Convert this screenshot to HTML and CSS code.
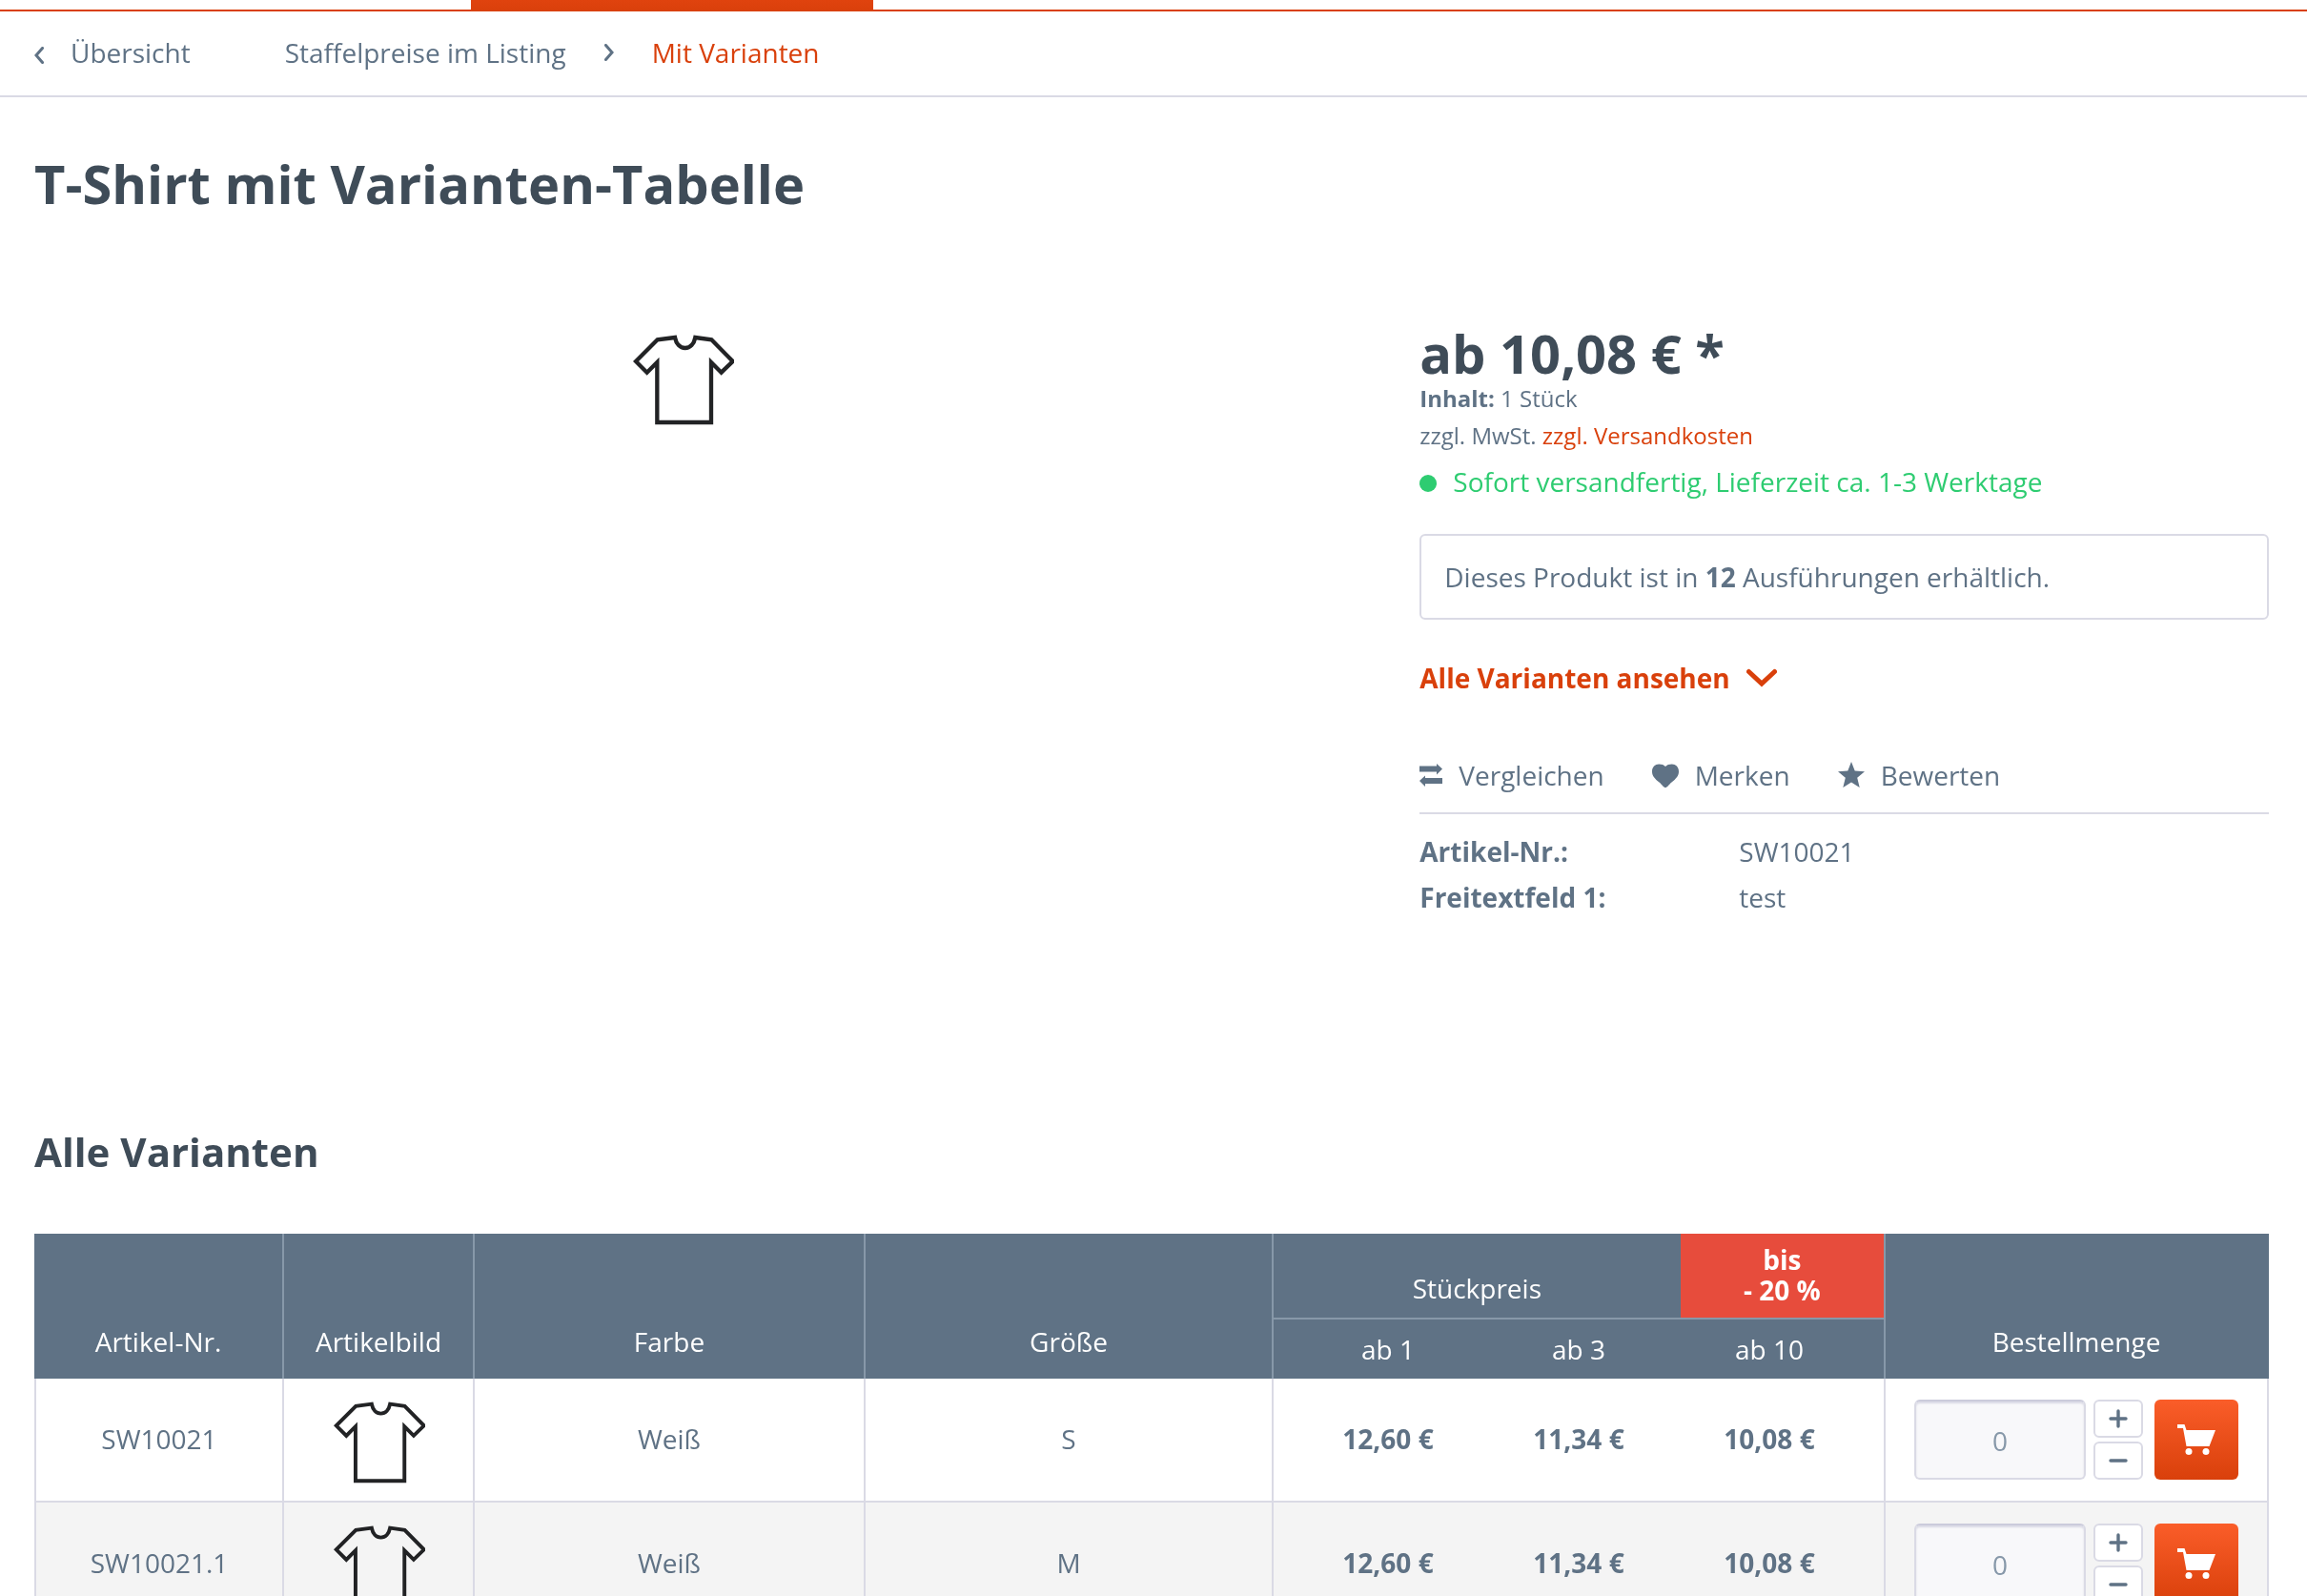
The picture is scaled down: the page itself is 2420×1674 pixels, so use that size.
FILE: index.html
```html
<!DOCTYPE html>
<html lang="de">
<head>
<meta charset="utf-8">
<meta name="viewport" content="width=device-width, initial-scale=1">
<title>T-Shirt mit Varianten-Tabelle</title>
<link rel="stylesheet" href="styles.css">
</head>
<body>
<svg class="sprite" aria-hidden="true">
  <symbol id="shirt" viewBox="72 60 318 288">
    <path d="M204 72 149 79 81 147 116 182 148 150V339H318V150L350 182 386 147 319 79 268 72C264 92 252 105 236 105S208 92 204 72Z" fill="#fff" stroke="#222325" stroke-width="13"/>
  </symbol>
  <symbol id="cart" viewBox="0 0 40 32">
    <path d="M0 0H7.500L9.500 6H40L33.500 23H9.500L6 4H0Z" fill="currentColor"/>
    <circle cx="12" cy="28.500" r="3.500" fill="currentColor"/><circle cx="30" cy="28.500" r="3.500" fill="currentColor"/>
  </symbol>
</svg>

<div class="tabbar"><span class="tabbar-active"></span></div>

<nav class="breadcrumb" aria-label="Brotkrumen">
  <a class="back" href="#"><svg class="back-arrow" viewBox="0 0 10 18" aria-hidden="true"><path d="M8.500 1.500 2 9l6.500 7.500" fill="none" stroke="currentColor" stroke-width="3" stroke-linecap="round"/></svg>Übersicht</a>
  <a class="crumb" href="#">Staffelpreise im Listing</a>
  <svg class="crumb-arrow" viewBox="0 0 10 18" aria-hidden="true"><path d="M1.500 1.500 8 9l-6.500 7.500" fill="none" stroke="currentColor" stroke-width="3" stroke-linecap="round"/></svg>
  <a class="crumb current" href="#">Mit Varianten</a>
</nav>

<main class="content">
  <h1>T-Shirt mit Varianten-Tabelle</h1>

  <section class="product">
    <div class="gallery"><svg class="shirt-large" role="img" aria-label="T-Shirt"><use href="#shirt"/></svg></div>
    <div class="buybox">
      <p class="price">ab 10,08 € *</p>
      <p class="small"><strong>Inhalt:</strong> 1 Stück</p>
      <p class="small">zzgl. MwSt. <a href="#">zzgl. Versandkosten</a></p>
      <p class="delivery"><span class="dot"></span>Sofort versandfertig, Lieferzeit ca. 1-3 Werktage</p>
      <p class="notice">Dieses Produkt ist in <strong>12</strong> Ausführungen erhältlich.</p>
      <a class="all-link" href="#varianten">Alle Varianten ansehen
        <svg class="chevron" viewBox="0 0 32 20" aria-hidden="true"><path d="M2.500 3.500 16 16 29.500 3.500" fill="none" stroke="currentColor" stroke-width="5" stroke-linecap="round"/></svg></a>
      <div class="actions">
        <button type="button"><svg class="icon-compare" viewBox="0 0 24 24" aria-hidden="true"><path d="M0 2.500H18V0L24 5.500 18 11.500V8.500H0ZM24 21H6V24L0 18 6 12.500V15H24Z" fill="currentColor"/></svg>Vergleichen</button>
        <button type="button"><svg class="icon-heart" viewBox="0 0 28 25" aria-hidden="true"><path d="M14 25C12 25 11 22.500 7.500 19.500 3 15.800 0 13 0 8.200 0 3.500 3.200 .500 7.200 .500c3 0 5.300 .800 6.800 2.500C15.500 1.300 17.800 .500 20.800 .500 24.800 .500 28 3.500 28 8.200 28 13 25 15.800 20.500 19.500 17 22.500 16 25 14 25Z" fill="currentColor"/></svg>Merken</button>
        <button type="button"><svg class="icon-star" viewBox="0 0 28 28" aria-hidden="true"><path d="M14 0 17.700 9.500 28 10.300 20.200 16.800 22.700 27 14 21.500 5.300 27 7.800 16.800 0 10.300 10.300 9.500Z" fill="currentColor"/></svg>Bewerten</button>
      </div>
      <dl class="attributes">
        <dt>Artikel-Nr.:</dt><dd>SW10021</dd>
        <dt>Freitextfeld 1:</dt><dd>test</dd>
      </dl>
    </div>
  </section>

  <section id="varianten">
    <h2>Alle Varianten</h2>
    <table class="variants">
      <colgroup><col class="c-nr"><col class="c-img"><col class="c-color"><col class="c-size"><col class="c-p1"><col class="c-p2"><col class="c-p3"><col class="c-order"></colgroup>
      <thead>
        <tr>
          <th rowspan="2">Artikel-Nr.</th>
          <th rowspan="2">Artikelbild</th>
          <th rowspan="2">Farbe</th>
          <th rowspan="2">Größe</th>
          <th class="price-head" colspan="3"><div class="price-split"><span class="unit">Stückpreis</span><strong class="discount">bis<br>- 20 %</strong></div></th>
          <th rowspan="2">Bestellmenge</th>
        </tr>
        <tr>
          <th class="tier first">ab 1</th>
          <th class="tier">ab 3</th>
          <th class="tier last">ab 10</th>
        </tr>
      </thead>
      <tbody>
        <tr>
          <td>SW10021</td>
          <td class="thumb"><svg class="shirt-small" role="img" aria-label="T-Shirt"><use href="#shirt"/></svg></td>
          <td>Weiß</td>
          <td>S</td>
          <td class="tier first">12,60 €</td>
          <td class="tier">11,34 €</td>
          <td class="tier last">10,08 €</td>
          <td class="order">
            <div class="order-row">
              <input class="qty" type="text" placeholder="0" aria-label="Bestellmenge SW10021">
              <div class="steps">
                <button type="button" aria-label="Mehr"><svg class="sign" viewBox="0 0 20 20"><path d="M2 10H18M10 2V18" stroke="currentColor" stroke-width="3.400" stroke-linecap="round"/></svg></button>
                <button type="button" aria-label="Weniger"><svg class="sign" viewBox="0 0 20 20"><path d="M2 10H18" stroke="currentColor" stroke-width="3.400" stroke-linecap="round"/></svg></button>
              </div>
              <button class="buy" type="button" aria-label="In den Warenkorb"><svg class="icon-cart"><use href="#cart"/></svg></button>
            </div>
          </td>
        </tr>
        <tr>
          <td>SW10021.1</td>
          <td class="thumb"><svg class="shirt-small" role="img" aria-label="T-Shirt"><use href="#shirt"/></svg></td>
          <td>Weiß</td>
          <td>M</td>
          <td class="tier first">12,60 €</td>
          <td class="tier">11,34 €</td>
          <td class="tier last">10,08 €</td>
          <td class="order">
            <div class="order-row">
              <input class="qty" type="text" placeholder="0" aria-label="Bestellmenge SW10021.1">
              <div class="steps">
                <button type="button" aria-label="Mehr"><svg class="sign" viewBox="0 0 20 20"><path d="M2 10H18M10 2V18" stroke="currentColor" stroke-width="3.400" stroke-linecap="round"/></svg></button>
                <button type="button" aria-label="Weniger"><svg class="sign" viewBox="0 0 20 20"><path d="M2 10H18" stroke="currentColor" stroke-width="3.400" stroke-linecap="round"/></svg></button>
              </div>
              <button class="buy" type="button" aria-label="In den Warenkorb"><svg class="icon-cart"><use href="#cart"/></svg></button>
            </div>
          </td>
        </tr>
      </tbody>
    </table>
  </section>
</main>
</body>
</html>
```

FILE: styles.css
```css
:root {
  --text: #5f7285;
  --heading: #3f4c58;
  --accent: #d9400b;
  --line: #dadae5;
  --head-line: #8798a9;
}

* { box-sizing: border-box; }

body {
  margin: 0;
  height: 100vh;
  overflow: hidden;
  background: #fff;
  color: var(--text);
  font: 400 28px/40px "Open Sans", sans-serif;
}

p, h1, h2, dl, dd { margin: 0; }
a { color: var(--accent); text-decoration: none; }
button, input { font: inherit; color: inherit; }
svg { display: block; flex: none; }
.sprite { display: none; }

/* Main navigation edge */
.tabbar {
  height: 12px;
  border-bottom: 2px solid var(--accent);
}
.tabbar-active {
  display: block;
  width: 422px;
  height: 12px;
  margin-left: 494px;
  background: linear-gradient(#e0430e, var(--accent));
}

/* Breadcrumb */
.breadcrumb {
  display: flex;
  align-items: center;
  padding: 23px 36px 25px;
  border-bottom: 2px solid var(--line);
}
.breadcrumb a { color: var(--text); }
.breadcrumb .current { color: var(--accent); }
.back {
  display: flex;
  align-items: center;
  gap: 28px;
  margin-right: 99px;
}
.back-arrow { width: 10px; height: 18px; margin-top: 5px; }
.crumb-arrow { width: 10px; height: 18px; margin: 0 40px; }

.content { padding: 0 40px 0 36px; }

h1, h2, .price { color: var(--heading); font-weight: 700; }
h1 { padding-top: 52px; font-size: 56px; line-height: 76px; }
h2 { margin-bottom: 58px; font-size: 42px; line-height: 56px; }

/* Product */
.product {
  display: grid;
  grid-template-columns: 1fr 38%;
  column-gap: 92px;
  padding-top: 111px;
}
.gallery {
  display: flex;
  justify-content: center;
  align-items: flex-start;
  min-height: 839px;
  padding-top: 9px;
}
.shirt-large { width: 106px; height: 96px; }
.price { font-size: 56px; line-height: 58px; }
.small { font-size: 24px; }
.price + .small { line-height: 38px; }
.delivery {
  display: flex;
  align-items: center;
  gap: 17px;
  margin-top: 8px;
  color: #2ecc71;
}
.dot { width: 18px; height: 18px; margin-top: 4px; border-radius: 50%; background: #2ecc71; }
.notice {
  margin: 35px 0 41px;
  padding: 23px 24px;
  border: 2px solid var(--line);
  border-radius: 6px;
}
.all-link { display: flex; align-items: center; gap: 17px; font-weight: 700; }
.chevron { width: 32px; height: 20px; }
.actions {
  display: flex;
  gap: 50px;
  margin-top: 62px;
  padding-bottom: 19px;
  border-bottom: 2px solid var(--line);
}
.actions button {
  display: flex;
  align-items: center;
  gap: 17px;
  padding: 0;
  border: 0;
  background: none;
}
.icon-compare { width: 24px; height: 24px; }
.icon-heart { width: 28px; height: 25px; }
.icon-star { width: 28px; height: 28px; }
.attributes {
  display: grid;
  grid-template-columns: 335px 1fr;
  margin-top: 15px;
  line-height: 48px;
}
.attributes dt { font-weight: 700; }

/* Variant table */
.variants {
  width: 100%;
  table-layout: fixed;
  border-spacing: 0;
  text-align: center;
}
.c-nr { width: 262px; }
.c-img { width: 200px; }
.c-size { width: 428px; }
.c-p1 { width: 220px; }
.c-p2 { width: 200px; }
.c-p3 { width: 222px; }
.c-order { width: 402px; }

.variants th {
  padding: 0 0 19px;
  border-right: 2px solid var(--head-line);
  background: var(--text);
  color: #fff;
  font-weight: 400;
  vertical-align: bottom;
}
.variants tr:first-child th:last-child { border-right-color: var(--text); }
.variants .price-head { padding: 0; border-bottom: 2px solid var(--head-line); }
.price-split { display: flex; height: 88px; }
.unit { flex: 2; align-self: flex-end; padding-bottom: 11px; }
.discount {
  flex: 1;
  padding: 11px 0;
  background: #e74c3c;
  line-height: 32px;
}
.variants th.tier { padding-top: 11px; padding-bottom: 11px; border-right: 0; }
.variants .first { padding-left: 20px; }
.variants .last { padding-right: 20px; }
.variants th.last { border-right: 2px solid var(--head-line); }

.variants td {
  padding: 0 0 2px;
  border-right: 2px solid var(--line);
  border-bottom: 2px solid var(--line);
}
.variants td:first-child { border-left: 2px solid var(--line); }
.variants tbody tr:nth-child(even) { background: #f4f4f4; }
.variants td.tier { font-weight: 700; }
.variants td.tier:not(.last) { border-right: 0; }
.variants .thumb { padding: 22px 0 18px 2px; }
.variants .order { padding: 22px 30px; }
.shirt-small { width: 96px; height: 87px; margin: 0 auto; }
.variants tbody tr:nth-child(even) .shirt-small { mix-blend-mode: multiply; }

.order-row { display: flex; }
.qty {
  flex: 1;
  min-width: 0;
  height: 84px;
  padding: 2px 0 0;
  border: 2px solid var(--line);
  border-top-color: #cbcbdb;
  border-radius: 6px;
  background: #f8f8fa;
  box-shadow: inset 0 2px 2px #dadae5;
  text-align: center;
}
.qty::placeholder { color: #8798a9; opacity: 1; }
.steps {
  display: flex;
  flex-direction: column;
  justify-content: space-between;
  width: 52px;
  margin: 0 12px 0 8px;
}
.steps button {
  display: flex;
  justify-content: center;
  align-items: center;
  height: 40px;
  padding: 0;
  border: 2px solid var(--line);
  border-radius: 6px;
  background: #fff;
}
.sign { width: 20px; height: 20px; }
.buy {
  display: flex;
  justify-content: center;
  align-items: center;
  width: 88px;
  height: 84px;
  padding: 0;
  border: 0;
  border-radius: 6px;
  background: linear-gradient(#fa5d29, var(--accent));
  color: #fff;
}
.icon-cart { width: 40px; height: 32px; }
```
